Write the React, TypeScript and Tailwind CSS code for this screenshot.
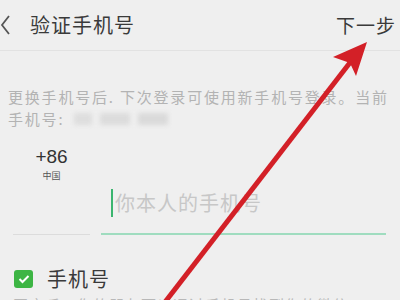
import React from "react";

export default function App() {
  const cjk = { fontFamily: '"Noto Sans CJK SC", "Noto Sans", sans-serif' };
  return (
    <div className="relative w-[400px] h-[300px] overflow-hidden bg-[#efefef]" style={cjk}>
      {/* header */}
      <div className="flex items-center h-[51px] border-b border-[#e2e2e2] pr-[4px]">
        <svg width="12" height="22" viewBox="0 0 12 22" className="ml-[0px]">
          <path d="M9 2 L2 11 L9 20" fill="none" stroke="#555" strokeWidth="1.8" />
        </svg>
        <div className="ml-[18px] text-[20px] leading-none text-[#3a3a3a] tracking-[1px]">验证手机号</div>
        <div className="ml-auto text-[19px] leading-none text-[#3a3a3a] tracking-[1px] pb-[2px]">下一步</div>
      </div>

      {/* description */}
      <div className="pl-[8px] pr-[6px] pt-[35px] text-[15px] leading-[22px] text-[#b3b3b3] tracking-[1.8px]">
        <div className="whitespace-nowrap">更换手机号后. 下次登录可使用新手机号登录。当前</div>
        <div className="flex items-center">
          <span>手机号:</span>
          <span className="ml-[10px] flex gap-[8px] items-center">
            <span className="w-[18px] h-[12px] bg-[#dedede] blur-[2px]" />
            <span className="w-[30px] h-[12px] bg-[#dcdcdc] blur-[2px]" />
            <span className="w-[30px] h-[12px] bg-[#dadada] blur-[2px]" />
          </span>
        </div>
      </div>

      {/* phone row */}
      <div className="flex items-stretch mt-[15px] h-[90px]">
        <div className="ml-[13px] w-[77px] h-full flex flex-col items-center border-b border-[#dcdcdc] pt-[2px]">
          <div className="text-[19px] leading-none text-[#333]" style={{ fontFamily: '"Liberation Sans", sans-serif' }}>+86</div>
          <div className="text-[9px] leading-none mt-[5px] text-[#555]">中国</div>
        </div>
        <div className="ml-[11px] w-[285px] h-full flex items-end border-b-2 border-[#9fdcbf] pb-[16px]">
          <div className="ml-[10px] w-[2px] h-[28px] bg-[#3bb56f]" />
          <div className="ml-[2px] text-[20px] leading-[28px] text-[#c7c7c7] tracking-[1px]">你本人的手机号</div>
        </div>
      </div>

      {/* checkbox row */}
      <div className="flex items-center mt-[34px] ml-[14px]">
        <div className="w-[19px] h-[18px] rounded-[3px] bg-[#3db544] flex items-center justify-center">
          <svg width="12" height="10" viewBox="0 0 12 10">
            <path d="M1.5 5 L4.5 8 L10.5 2" fill="none" stroke="#fff" strokeWidth="2" />
          </svg>
        </div>
        <div className="ml-[14px] text-[20px] leading-none text-[#3a3a3a] tracking-[1px]">手机号</div>
      </div>
      <div className="ml-[13px] mt-[8px] text-[15px] leading-none text-[#b8b8b8] whitespace-nowrap tracking-[1px]">
        开启后，你的朋友可以通过手机号找到你的微信
      </div>

      {/* red arrow overlay */}
      <svg className="absolute left-0 top-0 pointer-events-none" width="400" height="300" viewBox="0 0 400 300">
        <line x1="162" y1="306" x2="352" y2="60" stroke="#d32027" strokeWidth="5" />
        <polygon points="367,42 333,57 350,63 356,76" fill="#d32027" />
      </svg>
    </div>
  );
}
